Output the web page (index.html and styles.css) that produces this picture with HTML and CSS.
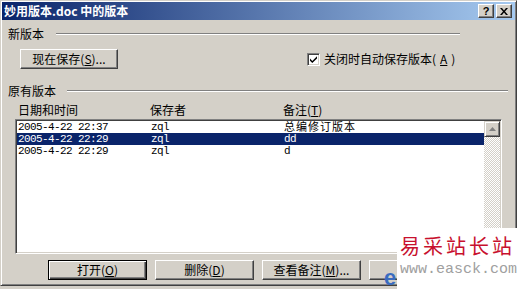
FILE: index.html
```html
<!DOCTYPE html>
<html lang="zh-CN">

<head>
  <meta charset="utf-8">
  <title>妙用版本.doc 中的版本</title>
  <link rel="stylesheet" href="styles.css">
</head>

<body>
  <div class="window">
    <div class="titlebar">
      <span class="title">妙用版本.doc 中的版本</span>
      <div class="caption-btns">
        <span class="cap-btn help">?</span>
        <span class="cap-btn">
          <svg width="8" height="7" viewBox="0 0 8 7"><path d="M0 0h2l2 2.5L6 0h2L5 3.5 8 7H6L4 4.5 2 7H0l3-3.5z" fill="#000"/></svg>
        </span>
      </div>
    </div>

    <div class="content">
      <div class="group group-new"><span>新版本</span><i class="etch"></i></div>
      <div class="save-row">
        <button type="button" class="btn btn-save">现在保存(<u>S</u>)...</button>
        <label class="check">
          <span class="box">
            <svg width="9" height="9" viewBox="0 0 9 9"><path d="M1 3.5l2.3 2.4L8 1.2V3.4L3.3 8.1 1 5.7z" fill="#000"/></svg>
          </span>
          关闭时自动保存版本(<u>A</u>)
        </label>
      </div>

      <div class="group group-old"><span>原有版本</span><i class="etch"></i></div>
      <div class="cols">
        <span>日期和时间</span>
        <span>保存者</span>
        <span>备注(<u>T</u>)</span>
      </div>

      <div class="listbox">
        <div class="rows">
          <div class="row"><span class="mono">2005-4-22 22:37</span><span class="mono">zql</span><span class="cjk">总编修订版本</span></div>
          <div class="row sel"><span class="mono">2005-4-22 22:29</span><span class="mono">zql</span><span class="mono">dd</span></div>
          <div class="row"><span class="mono">2005-4-22 22:29</span><span class="mono">zql</span><span class="mono">d</span></div>
        </div>
        <div class="scrollbar">
          <div class="sb-btn">
            <svg width="7" height="4" viewBox="0 0 7 4"><path d="M3.5 0L7 4H0z" fill="#808080"/></svg>
          </div>
          <div class="sb-track"></div>
        </div>
      </div>

      <div class="actions">
        <button type="button" class="btn default">打开(<u>O</u>)</button>
        <button type="button" class="btn">删除(<u>D</u>)</button>
        <button type="button" class="btn">查看备注(<u>M</u>)...</button>
        <button type="button" class="btn"></button>
      </div>
    </div>
  </div>

  <span class="ie-logo">e</span>
  <div class="watermark">
    <span class="wm-cn">易采站长站</span>
    <span class="wm-url">www.easck.com</span>
  </div>
</body>

</html>
```

FILE: styles.css
```css
body {
  margin: 0;
  width: 517px;
  height: 289px;
  overflow: hidden;
  background-color: #D4D0C8;
  font-family: "Noto Sans CJK SC", "Liberation Sans", sans-serif;
  font-size: 12px;
  color: #000;
}

.window {
  width: 517px;
  height: 286px;
  box-sizing: border-box;
  border: 1px solid;
  border-color: #D4D0C8 #404040 #404040 #D4D0C8;
  box-shadow: inset 1px 1px #fff, inset -1px -1px #808080;
  padding: 1px;
}

.titlebar {
  height: 18px;
  display: flex;
  align-items: center;
  justify-content: space-between;
  padding: 0 3px 0 2px;
  background: linear-gradient(to right, #0A246A, #A6CAF0);
}

.title {
  color: #fff;
  font-weight: bold;
  line-height: 14px;
}

.caption-btns {
  display: flex;
  gap: 2px;
}

.cap-btn {
  width: 16px;
  height: 14px;
  box-sizing: border-box;
  display: flex;
  align-items: center;
  justify-content: center;
  background-color: #D4D0C8;
  border: 1px solid;
  border-color: #fff #404040 #404040 #fff;
  box-shadow: inset -1px -1px #808080;
}

.help {
  font-family: "Liberation Sans", sans-serif;
  font-weight: bold;
  font-size: 11px;
  line-height: 11px;
}

.content {
  padding: 7px 7px 0 6px;
}

.group {
  display: flex;
  align-items: center;
  height: 14px;
  line-height: 14px;
}

.etch {
  flex: 1;
  height: 0;
  border-top: 1px solid #808080;
  border-bottom: 1px solid #fff;
  margin-left: 12px;
}

.group-new .etch {
  margin-right: 48px;
}

.group-old {
  margin-top: 15px;
}

.group-old .etch {
  margin-left: 11px;
}

.save-row {
  margin-top: 8px;
  height: 20px;
  display: flex;
  align-items: center;
}

.btn {
  width: 99px;
  height: 20px;
  box-sizing: border-box;
  padding: 0;
  font-family: inherit;
  font-size: 12px;
  line-height: 14px;
  color: #000;
  background-color: #D4D0C8;
  border: 1px solid;
  border-color: #fff #404040 #404040 #fff;
  box-shadow: inset -1px -1px #808080;
}

.btn.default {
  border: 1px solid #000;
  box-shadow: inset 1px 1px #fff, inset -1px -1px #404040, inset -2px -2px #808080;
}

.btn-save {
  margin-left: 12px;
  width: 98px;
}

.check {
  margin-left: 189px;
  display: flex;
  align-items: center;
  gap: 4px;
  line-height: 14px;
}

.box {
  width: 13px;
  height: 13px;
  box-sizing: border-box;
  display: flex;
  align-items: center;
  justify-content: center;
  background-color: #fff;
  border: 1px solid;
  border-color: #808080 #fff #fff #808080;
  box-shadow: inset 1px 1px #404040, inset -1px -1px #D4D0C8;
}

.cols {
  margin-top: 5px;
  height: 14px;
  line-height: 14px;
  padding-left: 10px;
  display: grid;
  grid-template-columns: 132px 133px auto;
}

.listbox {
  margin: 2px 6px 0 7px;
  height: 135px;
  box-sizing: border-box;
  border: 1px solid;
  border-color: #808080 #fff #fff #808080;
  box-shadow: inset 1px 1px #404040, inset -1px -1px #D4D0C8;
  padding: 1px;
  background-color: #fff;
  display: flex;
}

.rows {
  flex: 1;
}

.row {
  height: 12px;
  line-height: 12px;
  padding-left: 1px;
  display: grid;
  grid-template-columns: 133px 133px auto;
  align-items: start;
  white-space: nowrap;
}

.row.sel {
  background-color: #0A246A;
  color: #fff;
}

.mono {
  font-family: "Liberation Mono", monospace;
  font-size: 11px;
  letter-spacing: -0.6px;
}

.cjk {
  font-size: 11px;
  line-height: 11px;
  letter-spacing: 1px;
}

.scrollbar {
  width: 16px;
  display: flex;
  flex-direction: column;
}

.sb-btn {
  height: 16px;
  box-sizing: border-box;
  display: flex;
  align-items: center;
  justify-content: center;
  background-color: #D4D0C8;
  border: 1px solid;
  border-color: #D4D0C8 #404040 #404040 #D4D0C8;
  box-shadow: inset 1px 1px #fff, inset -1px -1px #808080;
}

.sb-track {
  flex: 1;
  background-image: repeating-conic-gradient(#fff 0 25%, #D4D0C8 0 50%);
  background-size: 2px 2px;
}

.actions {
  margin-top: 6px;
  padding-left: 40px;
  display: flex;
  gap: 8px;
}

.ie-logo {
  position: absolute;
  left: 384px;
  top: 267px;
  font-family: "Liberation Sans", sans-serif;
  font-weight: bold;
  font-size: 22px;
  line-height: 22px;
  color: #3A6CC0;
}

.watermark {
  position: absolute;
  left: 397px;
  top: 228px;
  width: 120px;
  height: 61px;
  background-color: #fff;
  display: flex;
  flex-direction: column;
  padding: 7px 0 0 3px;
  box-sizing: border-box;
}

.wm-cn {
  font-size: 20px;
  line-height: 22px;
  letter-spacing: 3px;
  color: #C8102E;
  white-space: nowrap;
}

.wm-url {
  margin-top: 5px;
  font-family: "Liberation Mono", monospace;
  font-size: 15px;
  line-height: 16px;
  color: #A0A0A0;
  white-space: nowrap;
}
```
